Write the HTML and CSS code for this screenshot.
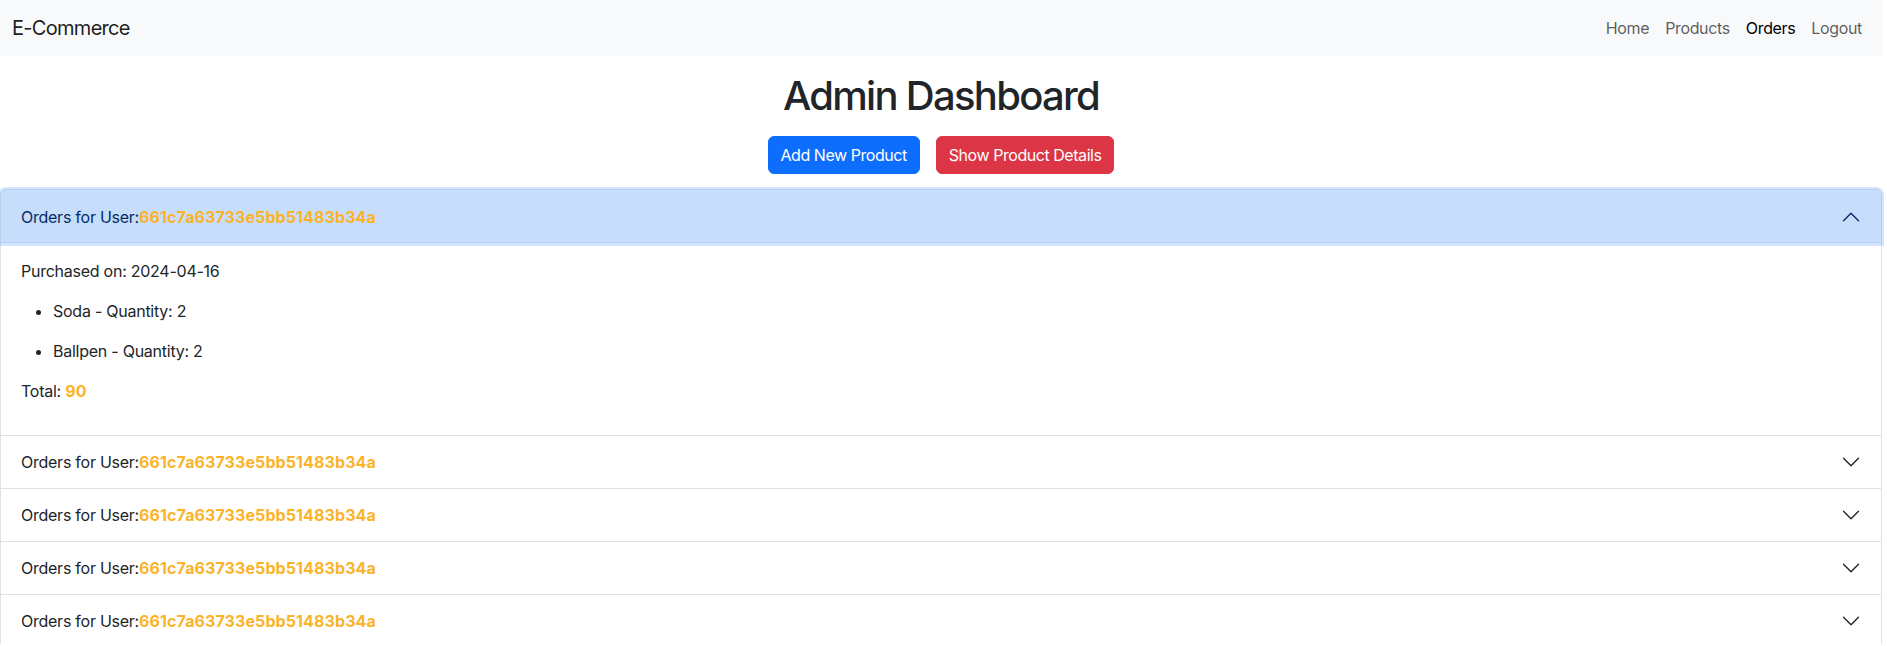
FILE: index.html
```html
<!DOCTYPE html>
<html lang="en">
<head>
<meta charset="utf-8">
<title>Admin Dashboard</title>
<link rel="stylesheet" href="styles.css">
</head>
<body>
<div class="page">
  <nav class="navbar">
    <a class="brand" href="#">E-Commerce</a>
    <ul class="nav">
      <li><a class="nav-link" href="#">Home</a></li>
      <li><a class="nav-link" href="#">Products</a></li>
      <li><a class="nav-link active" href="#">Orders</a></li>
      <li><a class="nav-link" href="#">Logout</a></li>
    </ul>
  </nav>

  <h1 class="title">Admin Dashboard</h1>
  <div class="actions">
    <button class="btn btn-primary">Add New Product</button>
    <button class="btn btn-danger">Show Product Details</button>
  </div>

  <div class="accordion">
    <div class="acc-item">
      <button class="acc-button expanded">
        <span>Orders for User:<b class="uid">661c7a63733e5bb51483b34a</b></span>
        <svg class="chev" viewBox="0 0 16 16" fill="none"><path d="M2 5L8 11L14 5" stroke="currentColor" stroke-width="1.1" stroke-linecap="round" stroke-linejoin="round"/></svg>
      </button>
      <div class="acc-body">
        <p>Purchased on: 2024-04-16</p>
        <ul>
          <li>Soda - Quantity: 2</li>
          <li>Ballpen - Quantity: 2</li>
        </ul>
        <p>Total: <b class="uid">90</b></p>
      </div>
    </div>
    <div class="acc-item">
      <button class="acc-button">
        <span>Orders for User:<b class="uid">661c7a63733e5bb51483b34a</b></span>
        <svg class="chev" viewBox="0 0 16 16" fill="none"><path d="M2 5L8 11L14 5" stroke="currentColor" stroke-width="1.1" stroke-linecap="round" stroke-linejoin="round"/></svg>
      </button>
    </div>
    <div class="acc-item">
      <button class="acc-button">
        <span>Orders for User:<b class="uid">661c7a63733e5bb51483b34a</b></span>
        <svg class="chev" viewBox="0 0 16 16" fill="none"><path d="M2 5L8 11L14 5" stroke="currentColor" stroke-width="1.1" stroke-linecap="round" stroke-linejoin="round"/></svg>
      </button>
    </div>
    <div class="acc-item">
      <button class="acc-button">
        <span>Orders for User:<b class="uid">661c7a63733e5bb51483b34a</b></span>
        <svg class="chev" viewBox="0 0 16 16" fill="none"><path d="M2 5L8 11L14 5" stroke="currentColor" stroke-width="1.1" stroke-linecap="round" stroke-linejoin="round"/></svg>
      </button>
    </div>
    <div class="acc-item">
      <button class="acc-button">
        <span>Orders for User:<b class="uid">661c7a63733e5bb51483b34a</b></span>
        <svg class="chev" viewBox="0 0 16 16" fill="none"><path d="M2 5L8 11L14 5" stroke="currentColor" stroke-width="1.1" stroke-linecap="round" stroke-linejoin="round"/></svg>
      </button>
    </div>
  </div>
</div>
</body>
</html>
```

FILE: styles.css
```css
* { box-sizing: border-box; }
html { overflow: hidden; }
body {
  margin: 0;
  font-family: Inter, "Liberation Sans", Arial, sans-serif;
  font-size: 16px;
  line-height: 1.5;
  letter-spacing: -0.25px;
  color: #212529;
  background: #fff;
}
.page { width: calc(100% - 5px); }

.navbar {
  display: flex;
  align-items: center;
  justify-content: space-between;
  height: 56px;
  padding: 8px 12px;
  background: #f8f9fa;
}
.brand {
  font-size: 20px;
  line-height: 30px;
  letter-spacing: -0.7px;
  color: rgba(0,0,0,.9);
  text-decoration: none;
}
.nav {
  display: flex;
  list-style: none;
  margin: 0;
  padding: 0;
}
.nav-link {
  display: block;
  padding: 8px 8px;
  letter-spacing: -0.35px;
  color: rgba(0,0,0,.65);
  text-decoration: none;
}
.nav-link.active { color: #000; }

.title {
  margin: 16px 0 8px;
  text-align: center;
  font-size: 40px;
  line-height: 1.2;
  font-weight: 500;
  letter-spacing: -1.7px;
}
.actions {
  display: flex;
  justify-content: center;
  gap: 16px;
  margin: 16px 0 15px;
}
.btn {
  font: inherit;
  font-size: 16px;
  line-height: 24px;
  letter-spacing: -0.45px;
  padding: 6px 12px;
  border: 1px solid transparent;
  border-radius: 6px;
  color: #fff;
  cursor: pointer;
}
.btn-primary { background: #0d6efd; border-color: #0d6efd; }
.btn-danger { background: #dc3545; border-color: #dc3545; }

.accordion {
  border: 1px solid #dee2e6;
  border-radius: 6px;
}
.acc-item + .acc-item { border-top: 1px solid #dee2e6; }
.acc-button {
  display: flex;
  align-items: center;
  width: 100%;
  padding: 14px 20px;
  font: inherit;
  font-size: 16px;
  line-height: 24px;
  letter-spacing: -0.25px;
  color: #212529;
  background: #fff;
  border: 0;
  text-align: left;
  cursor: pointer;
}
.acc-button.expanded {
  position: relative;
  z-index: 2;
  height: 53px;
  color: #052c65;
  background: #c7ddfc;
  border-radius: 5px 5px 0 0;
  box-shadow: inset 0 -1px 0 #b9d1f5, 0 0 0 3px rgba(13,110,253,.18);
}
.uid { color: #fbb32a; font-weight: 700; letter-spacing: 0.1px; }
.chev {
  width: 20px;
  height: 20px;
  margin-left: auto;
  flex-shrink: 0;
}
.acc-button.expanded .chev { transform: rotate(180deg); }
.acc-body {
  padding: 16px 20px;
}
.acc-body p { margin: 0 0 16px; }
.acc-body ul {
  margin: 0 0 16px;
  padding-left: 32px;
}
.acc-body li + li { margin-top: 16px; }
```
